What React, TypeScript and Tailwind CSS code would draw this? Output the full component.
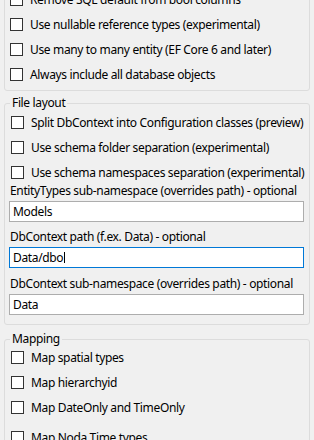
import React from "react";

// Options panel (WinForms-style group boxes)

const Check = ({ label }: { label: string }) => (
  <div className="flex h-[13px] items-center gap-[7px]">
    <span className="h-[13px] w-[13px] shrink-0 border border-[#333333] bg-white" />
    <span className="whitespace-nowrap leading-[13px]">{label}</span>
  </div>
);

const Field = ({ label, value, focused, className }: { label: string; value: string; focused?: boolean; className?: string }) => (
  <div className={className}>
    <div className="ml-[5px] whitespace-nowrap leading-[14px]">{label}</div>
    <div
      className={`mt-[3px] ml-[4px] flex h-[21px] w-[295px] items-center border bg-white pl-[3px] ${
        focused ? "border-[#0078d7]" : "border-[#adadad]"
      }`}
    >
      <span className="leading-[14px]">{value}</span>
      {focused && <span className="ml-[1px] h-[11px] w-[1px] bg-black" />}
    </div>
  </div>
);

const Group = ({ title, children, className }: { title: string; children: React.ReactNode; className?: string }) => (
  <fieldset className={`ml-[4px] w-[306px] rounded-[3px] border border-[#dcdcdc] ${className ?? ""}`}>
    <legend className="ml-[5px] px-[2px] leading-[14px]">{title}</legend>
    {children}
  </fieldset>
);

export default function App() {
  return (
    <div
      className="h-[440px] w-[314px] overflow-hidden bg-[#f0f0f0] text-[12px] tracking-[-0.35px] text-black"
      style={{ fontFamily: '"Noto Sans", "Open Sans", sans-serif' }}
    >
      <div className="mt-[-20px] ml-[4px] flex w-[306px] flex-col gap-[12px] rounded-[3px] border border-[#dcdcdc] pt-[12px] pb-[9px] pl-[5px]">
        <Check label="Remove SQL default from bool columns" />
        <Check label="Use nullable reference types (experimental)" />
        <Check label="Use many to many entity (EF Core 6 and later)" />
        <Check label="Always include all database objects" />
      </div>

      <Group title="File layout" className="mt-[5px] pb-[9px]">
        <div className="mt-[6px] flex flex-col gap-[12px] pl-[6px]">
          <Check label="Split DbContext into Configuration classes (preview)" />
          <Check label="Use schema folder separation (experimental)" />
          <Check label="Use schema namespaces separation (experimental)" />
        </div>
        <Field className="mt-[5px]" label="EntityTypes sub-namespace (overrides path) - optional" value="Models" />
        <Field className="mt-[8px]" label="DbContext path (f.ex. Data) - optional" value="Data/dbo" focused />
        <Field className="mt-[9px]" label="DbContext sub-namespace (overrides path) - optional" value="Data" />
      </Group>

      <Group title="Mapping" className="mt-[7px] pb-[20px]">
        <div className="mt-[5px] flex flex-col gap-[12px] pl-[6px]">
          <Check label="Map spatial types" />
          <Check label="Map hierarchyid" />
          <Check label="Map DateOnly and TimeOnly" />
          <div className="mt-[5px]">
            <Check label="Map Noda Time types" />
          </div>
        </div>
      </Group>
    </div>
  );
}
